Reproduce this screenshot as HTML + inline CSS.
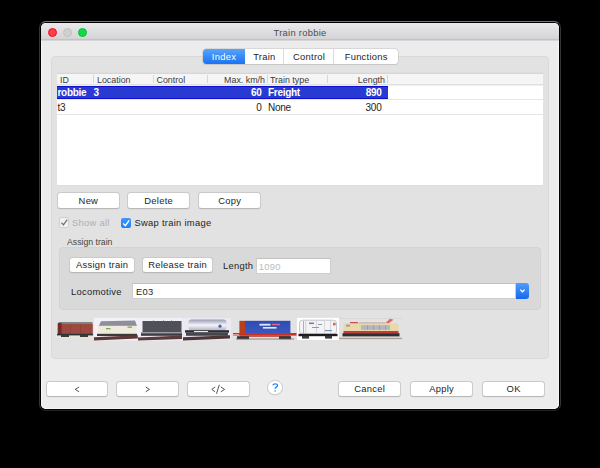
<!DOCTYPE html>
<html><head><meta charset="utf-8">
<style>
*{box-sizing:border-box;margin:0;padding:0}
html,body{width:600px;height:468px;background:#000;overflow:hidden;font-family:"Liberation Sans",sans-serif;color:#242424}
.abs{position:absolute}
#outline{position:absolute;left:39px;top:21px;width:522px;height:390px;border:1px solid #363636;border-top-color:#767676;border-bottom-color:#242424;border-radius:7px}
#win{position:absolute;left:41px;top:23px;width:518px;height:386px;background:#ececec;border-radius:5px;overflow:hidden;box-shadow:inset 0 0 0 1px #f6f6f6}
#title{position:absolute;left:0;top:0;width:518px;height:17px;background:linear-gradient(#eae9eb,#d4d3d6);border-bottom:1px solid #c2c2c4;box-shadow:0 1px 0 #d6d6d6;border-radius:5px 5px 0 0}
.tl{position:absolute;top:4.6px;width:9.2px;height:9.2px;border-radius:50%}
#ttext{position:absolute;left:0;width:518px;top:2.6px;text-align:center;font-size:9.4px;letter-spacing:0.28px;color:#4d4d4d;line-height:14px}
.t{position:absolute;white-space:nowrap;font-size:9.4px;letter-spacing:0.28px;line-height:12px}
.btn{position:absolute;background:#fff;border:1px solid #cacaca;border-bottom-color:#b8b8b8;border-radius:3.5px;text-align:center;font-size:9.4px;letter-spacing:0.28px;text-indent:0.28px;color:#242424;box-shadow:0 0.5px 0.5px rgba(0,0,0,0.06)}
.hd{position:absolute;white-space:nowrap;top:73.6px;font-size:8.9px;line-height:12px;color:#3a3a3a}
.r1{position:absolute;white-space:nowrap;top:86px;font-size:10px;letter-spacing:-0.3px;font-weight:bold;color:#fff;line-height:13px}
.r2{position:absolute;white-space:nowrap;top:100.6px;font-size:10px;letter-spacing:-0.25px;color:#242424;line-height:13px}
.sep{position:absolute;top:75px;width:1px;height:8px;background:#d6d6d6}
</style></head><body>
<div id="outline"></div>
<div id="win">
  <div id="title">
    <div class="tl" style="left:7px;background:#ff4049;border:0.7px solid #f2101c"></div>
    <div class="tl" style="left:22px;background:#d0d0d0;border:0.6px solid #c0c0c0"></div>
    <div class="tl" style="left:37px;background:#14d84c;border:0.7px solid #00c42c"></div>
    <div id="ttext">Train robbie</div>
  </div>
</div>

<!-- outer group box -->
<div class="abs" style="left:51px;top:56px;width:498px;height:303px;background:#e2e2e2;border:1px solid #d9d9d9;border-radius:4px"></div>

<!-- segmented control -->
<div class="abs" style="left:202.7px;top:48.8px;width:195px;height:15.5px;background:#fff;border-radius:3.5px;box-shadow:0 0 0 0.6px #c6c6c6, 0 0.6px 0.8px rgba(0,0,0,0.12);overflow:hidden;font-size:9.4px;letter-spacing:0.28px;text-indent:0.28px">
  <div class="abs" style="left:0;top:0;width:42.3px;height:15.5px;background:linear-gradient(#57a3fb,#1a73f3);color:#fff;text-align:center;line-height:15.5px">Index</div>
  <div class="abs" style="left:42.3px;top:0;width:39.5px;height:15.5px;border-right:0.8px solid #dcdcdc;text-align:center;line-height:15.5px">Train</div>
  <div class="abs" style="left:81.8px;top:0;width:50px;height:15.5px;border-right:0.8px solid #dcdcdc;text-align:center;line-height:15.5px">Control</div>
  <div class="abs" style="left:131.8px;top:0;width:63.2px;height:15.5px;text-align:center;line-height:15.5px">Functions</div>
</div>

<!-- table -->
<div class="abs" style="left:57px;top:73px;width:486px;height:112px;background:#fff;border-top:1px solid #d6d6d6;box-shadow:0 1px 0 #dcdcdc, 0 -1px 0 #dedede"></div>
<div class="abs" style="left:57px;top:74px;width:486px;height:11px;background:#f5f5f5;border-bottom:1px solid #e0e0e0;box-shadow:0 1px 0 #efefef"></div>
<div class="abs" style="left:57px;top:86px;width:331px;height:13px;background:#283ad2;border-top:1px solid #0c10cc;border-bottom:1px solid #0c10cc"></div>
<div class="abs" style="left:57px;top:99px;width:486px;height:1px;background:#e6e6e6"></div>
<div class="abs" style="left:57px;top:114px;width:486px;height:1px;background:#e4e4e4"></div>
<div class="sep" style="left:93px"></div>
<div class="sep" style="left:153px"></div>
<div class="sep" style="left:207px"></div>
<div class="sep" style="left:267px"></div>
<div class="sep" style="left:327px"></div>
<div class="sep" style="left:387px"></div>
<div class="hd" style="left:60px">ID</div>
<div class="hd" style="left:97px">Location</div>
<div class="hd" style="left:156.5px">Control</div>
<div class="hd" style="left:207px;width:58px;text-align:right">Max. km/h</div>
<div class="hd" style="left:270px">Train type</div>
<div class="hd" style="left:327px;width:58px;text-align:right">Length</div>
<div class="r1" style="left:57.5px">robbie</div>
<div class="r1" style="left:93.5px">3</div>
<div class="r1" style="left:207px;width:54.5px;text-align:right">60</div>
<div class="r1" style="left:268px">Freight</div>
<div class="r1" style="left:327px;width:54.5px;text-align:right">890</div>
<div class="r2" style="left:57.5px">t3</div>
<div class="r2" style="left:207px;width:54.5px;text-align:right">0</div>
<div class="r2" style="left:268px">None</div>
<div class="r2" style="left:327px;width:54.5px;text-align:right">300</div>

<!-- buttons row -->
<div class="btn" style="left:57px;top:192px;width:62.5px;height:17px;line-height:15px">New</div>
<div class="btn" style="left:127px;top:192px;width:63px;height:17px;line-height:15px">Delete</div>
<div class="btn" style="left:198px;top:192px;width:63px;height:17px;line-height:15px">Copy</div>

<!-- checkboxes -->
<div class="abs" style="left:58.5px;top:217px;width:10.5px;height:10.5px;background:#f2f2f2;border:1px solid #cfcfcf;border-radius:2px"></div>
<svg class="abs" style="left:58.5px;top:217px" width="10.5" height="10.5" viewBox="0 0 10.5 10.5"><path d="M2.4 5.6 L4.4 7.8 L8.2 2.6" fill="none" stroke="#7a7a7a" stroke-width="1.4"/></svg>
<div class="t" style="left:72px;top:217px;color:#b0b0b0">Show all</div>
<div class="abs" style="left:120.8px;top:217.5px;width:10.2px;height:10.2px;background:linear-gradient(#3e98fd,#1f80f8);border-radius:2px"></div>
<svg class="abs" style="left:120.8px;top:217.5px" width="10.2" height="10.2" viewBox="0 0 10.2 10.2"><path d="M2.2 5.6 L4.4 7.7 L8.2 2.4" fill="none" stroke="#fff" stroke-width="1.4"/></svg>
<div class="t" style="left:134.5px;top:217px">Swap train image</div>

<!-- assign train -->
<div class="t" style="left:67px;top:235.7px;font-size:8.7px;letter-spacing:0;color:#454545">Assign train</div>
<div class="abs" style="left:59px;top:247px;width:482px;height:63px;background:#d9d9d9;border:1px solid #d3d3d3;border-radius:4px"></div>
<div class="btn" style="left:69px;top:257px;width:66px;height:16px;line-height:13.5px">Assign train</div>
<div class="btn" style="left:142px;top:257px;width:71px;height:16px;line-height:13.5px">Release train</div>
<div class="t" style="left:223px;top:259.8px">Length</div>
<div class="abs" style="left:255.5px;top:257.5px;width:75px;height:16.5px;background:#fff;border:1px solid #cfcfcf;border-top-color:#c2c2c2"></div>
<div class="t" style="left:258.7px;top:260.8px;color:#bcbcbc">1090</div>
<div class="t" style="left:71px;top:286px">Locomotive</div>
<div class="abs" style="left:132px;top:282.5px;width:384px;height:16.5px;background:#fff;border:1px solid #cdcdcd;border-top-color:#c0c0c0"></div>
<div class="t" style="left:136px;top:286px">E03</div>
<div class="abs" style="left:515.5px;top:282.5px;width:13px;height:16px;background:linear-gradient(#4f9dfb,#1667f0);border-radius:0 3px 3px 0"></div>
<svg class="abs" style="left:515.5px;top:282.5px" width="13" height="15.5" viewBox="0 0 13 15.5"><path d="M4.3 6.6 L6.5 8.8 L8.7 6.6" fill="none" stroke="#fff" stroke-width="1.3"/></svg>

<!-- trains -->
<svg class="abs" style="left:0;top:0;filter:blur(0.35px)" width="600" height="468" viewBox="0 0 600 468">
<defs>
<linearGradient id="tank" x1="0" y1="0" x2="0" y2="1"><stop offset="0" stop-color="#9c9cb2"/><stop offset="0.5" stop-color="#f4f4fb"/><stop offset="1" stop-color="#b0b0bc"/></linearGradient>
<linearGradient id="cont" x1="0" y1="0" x2="0" y2="1"><stop offset="0" stop-color="#2f4cb4"/><stop offset="1" stop-color="#3a58c0"/></linearGradient>
</defs>
<rect x="55" y="336.4" width="38" height="1.2" fill="#ebe5d8"/>
<rect x="58.5" y="322" width="34" height="2.1" fill="#7e8484"/>
<rect x="57.8" y="324" width="35" height="10.3" fill="#9c4a40"/>
<rect x="57.8" y="323" width="3.8" height="11.3" fill="#7a2a24"/>
<rect x="70" y="324.5" width="0.6" height="9.5" fill="#8a3a32"/>
<rect x="80" y="324.5" width="0.6" height="9.5" fill="#8a3a32"/>
<rect x="57" y="333.8" width="36" height="1.6" fill="#2a3038"/>
<rect x="61" y="334.6" width="8" height="2.4" fill="#3c3a32"/>
<rect x="80" y="334.6" width="8" height="2.4" fill="#3c3a32"/>
<rect x="93.8" y="317.8" width="44.2" height="22.6" fill="#f3f0f7"/>
<path d="M98.5 326.5 L101 321.2 L135 320.4 L137 326 Z" fill="#8e8e9c"/>
<rect x="98" y="325.8" width="38.5" height="8.2" fill="#eeeadc"/>
<rect x="106" y="328" width="4.5" height="1.3" fill="#78a85e"/>
<rect x="127.5" y="326.5" width="4.5" height="1.3" fill="#78a85e"/>
<rect x="97" y="333.8" width="40" height="2.2" fill="#3c3a38"/>
<path d="M94 337.2 L138 335.2 L138 338.6 L94 340.4 Z" fill="#5e3838"/>
<rect x="137.8" y="317.8" width="45" height="22.8" fill="#f1eff6"/>
<rect x="142.5" y="321" width="39" height="11.5" fill="#505058"/>
<rect x="153" y="320.5" width="1" height="1.2" fill="#6a6a70"/>
<rect x="163" y="320.5" width="1" height="1.2" fill="#6a6a70"/>
<rect x="171" y="320.5" width="1" height="1.2" fill="#6a6a70"/>
<rect x="141" y="332" width="41" height="1.2" fill="#9a9aa2"/>
<rect x="141" y="333.3" width="41" height="2.5" fill="#38383e"/>
<path d="M138 337.6 L182.5 335.6 L182.5 339 L138 340.6 Z" fill="#5a3a3a"/>
<rect x="182" y="318" width="49.2" height="22.2" fill="#ece9f5"/>
<rect x="188.5" y="319.6" width="38" height="11" rx="3" fill="url(#tank)"/>
<circle cx="220" cy="326.2" r="1.6" fill="#4a62b4"/>
<rect x="185" y="330.2" width="44" height="2.4" fill="#2c2c32"/>
<rect x="194" y="331" width="14" height="1.2" fill="#e8e8ee"/>
<rect x="186" y="332.4" width="42" height="3.4" fill="#46464c"/>
<path d="M183 337.2 L230 335.2 L230 338.6 L183 340.4 Z" fill="#4c3636"/>
<rect x="239.4" y="320.8" width="5.6" height="12.4" fill="#b8401e"/>
<rect x="245" y="320.8" width="45.4" height="12.4" fill="url(#cont)"/>
<rect x="259.5" y="323.8" width="11" height="1.8" fill="#e4e8f6"/>
<rect x="263" y="327" width="13.5" height="1.6" fill="#e4e8f6"/>
<rect x="272" y="323.8" width="8" height="1.4" fill="#d86a80"/>
<rect x="233" y="333" width="63.5" height="2.6" fill="#cc3024"/><rect x="240" y="335.4" width="50" height="1.4" fill="#b83a30"/>
<rect x="233" y="334.2" width="6" height="1.2" fill="#f0b0a8"/>
<rect x="237" y="336.2" width="12" height="3" fill="#3a3234"/><rect x="279" y="336.2" width="12" height="3" fill="#3a3234"/><rect x="236" y="338.6" width="58" height="0.8" fill="#7a6a66"/>
<rect x="297" y="317.9" width="42" height="22.1" fill="#ffffff"/>
<rect x="299.5" y="320.2" width="37" height="13.8" rx="3" fill="#f4f4f6" stroke="#b8b8bc" stroke-width="0.8"/>
<rect x="303" y="321" width="0.9" height="12.5" fill="#a8a8ac"/>
<rect x="305.5" y="321" width="0.7" height="12.5" fill="#c0c0c4"/>
<rect x="316" y="321" width="0.6" height="12.5" fill="#c4c4c8"/>
<rect x="324" y="321" width="0.6" height="12.5" fill="#c4c4c8"/>
<rect x="330" y="321" width="0.6" height="12.5" fill="#c4c4c8"/>
<rect x="309" y="322.5" width="5" height="1.6" fill="#7080ac"/>
<rect x="312" y="327" width="7" height="1" fill="#8898b8"/>
<rect x="318" y="324" width="4" height="1" fill="#8898b8"/>
<rect x="325" y="330" width="7" height="1.1" fill="#7888b0"/>
<rect x="333" y="322.8" width="2.6" height="2.6" fill="#d46a5a"/>
<rect x="298.5" y="333.8" width="39" height="2.4" fill="#1c1c20"/>
<rect x="302" y="335.8" width="7" height="2.8" fill="#3a3a34"/>
<rect x="325" y="335.8" width="7" height="2.8" fill="#3a3a34"/>
<rect x="339" y="318.2" width="63" height="0.8" fill="#d6d6d6"/>
<rect x="339" y="337.8" width="63" height="1.3" fill="#ab9c8e"/>
<rect x="350" y="322" width="8" height="2" fill="#cc4c4c"/>
<rect x="359" y="322.6" width="26" height="1.6" fill="#b09088"/>
<path d="M385 323.5 L390 318.8 L393.5 319.8 L388.5 323.5 Z" fill="#d86868"/>
<rect x="343.5" y="323.2" width="55" height="8.8" rx="2" fill="#e9d8aa"/>
<rect x="361" y="325.2" width="29" height="4.6" fill="#b2b6c2"/>
<rect x="367" y="325.2" width="0.6" height="4.6" fill="#8c90a0"/>
<rect x="373" y="325.2" width="0.6" height="4.6" fill="#8c90a0"/>
<rect x="379" y="325.2" width="0.6" height="4.6" fill="#8c90a0"/>
<rect x="385" y="325.2" width="0.6" height="4.6" fill="#8c90a0"/>
<rect x="346" y="324.6" width="4" height="2" fill="#9aa0ac"/>
<rect x="343.5" y="331" width="55" height="2.4" fill="#c23c36"/>
<rect x="342.5" y="333.2" width="57" height="3.2" fill="#2e3038"/>
</svg>

<!-- bottom buttons -->
<div class="btn" style="left:46px;top:381px;width:62px;height:16px;line-height:14px"></div>
<div class="btn" style="left:116px;top:381px;width:63px;height:16px;line-height:14px"></div>
<div class="btn" style="left:187px;top:381px;width:63px;height:16px;line-height:14px"></div>
<svg class="abs" style="left:0;top:0" width="600" height="468" viewBox="0 0 600 468"><g fill="none" stroke="#3a3a3a" stroke-width="0.85" stroke-linecap="round" stroke-linejoin="round"><path d="M78.8 387.2 L75.2 389.4 L78.8 391.6"/><path d="M146 387.2 L149.5 389.4 L146 391.6"/><path d="M214.8 387.2 L211.8 389.4 L214.8 391.6"/><path d="M219.2 385.2 L216.6 393.4"/><path d="M221.2 387.2 L224.6 389.4 L221.2 391.6"/></g></svg>
<div class="abs" style="left:267px;top:379.5px;width:15.6px;height:15.6px;border-radius:50%;background:#fff;border:1px solid #cbcbcb;box-shadow:0 0.5px 0.5px rgba(0,0,0,0.08)"></div>
<svg class="abs" style="left:0;top:0" width="600" height="468" viewBox="0 0 600 468"><path d="M272.9 385.4 C273.1 383.5 277.7 383.3 277.5 385.6 C277.4 387.1 275.2 387.2 275.1 388.8" fill="none" stroke="#2585f8" stroke-width="1.3" stroke-linecap="butt"/><circle cx="275.1" cy="391" r="0.8" fill="#2585f8"/></svg>
<div class="btn" style="left:338px;top:381px;width:63px;height:16px;line-height:14px">Cancel</div>
<div class="btn" style="left:410px;top:381px;width:63px;height:16px;line-height:14px">Apply</div>
<div class="btn" style="left:482px;top:381px;width:63px;height:16px;line-height:14px">OK</div>
</body></html>
